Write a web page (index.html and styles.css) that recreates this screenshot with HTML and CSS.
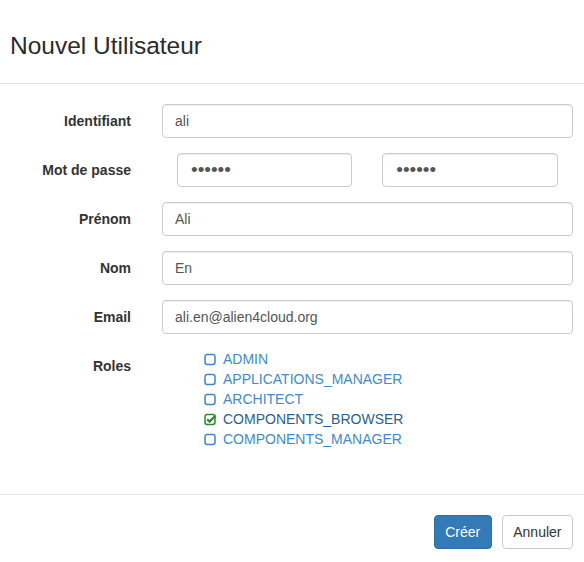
FILE: index.html
```html
<!DOCTYPE html>
<html lang="fr">
<head>
<meta charset="utf-8">
<title>Nouvel Utilisateur</title>
<link rel="stylesheet" href="styles.css">
</head>
<body>
<div class="modal">
  <div class="modal-header">
    <h3 class="modal-title">Nouvel Utilisateur</h3>
  </div>
  <form class="modal-body">
    <div class="form-row">
      <label class="form-label">Identifiant</label>
      <div class="field"><input class="form-control" type="text" value="ali"></div>
    </div>
    <div class="form-row">
      <label class="form-label">Mot de passe</label>
      <div class="field pair">
        <input class="form-control pwd" type="password" value="ali123">
        <input class="form-control pwd" type="password" value="ali123">
      </div>
    </div>
    <div class="form-row">
      <label class="form-label">Prénom</label>
      <div class="field"><input class="form-control" type="text" value="Ali"></div>
    </div>
    <div class="form-row">
      <label class="form-label">Nom</label>
      <div class="field"><input class="form-control" type="text" value="En"></div>
    </div>
    <div class="form-row">
      <label class="form-label">Email</label>
      <div class="field"><input class="form-control" type="text" value="ali.en@alien4cloud.org"></div>
    </div>
    <div class="form-row roles-row">
      <label class="form-label">Roles</label>
      <ul class="roles">
        <li class="role"><svg class="box" viewBox="0 0 13 13" width="13" height="13"><rect x="1" y="1.5" width="10" height="10" rx="2.2" fill="none" stroke="#3f86c8" stroke-width="1.5"/></svg>ADMIN</li>
        <li class="role"><svg class="box" viewBox="0 0 13 13" width="13" height="13"><rect x="1" y="1.5" width="10" height="10" rx="2.2" fill="none" stroke="#3f86c8" stroke-width="1.5"/></svg>APPLICATIONS_MANAGER</li>
        <li class="role"><svg class="box" viewBox="0 0 13 13" width="13" height="13"><rect x="1" y="1.5" width="10" height="10" rx="2.2" fill="none" stroke="#3f86c8" stroke-width="1.5"/></svg>ARCHITECT</li>
        <li class="role checked"><svg class="box" viewBox="0 0 13 13" width="13" height="13"><rect x="1" y="1.5" width="10" height="10" rx="2.2" fill="none" stroke="#2d8a2d" stroke-width="1.5"/><path d="M3.2 6.2 L5.6 8.6 L11.6 2.4" fill="none" stroke="#2d8a2d" stroke-width="2.2"/></svg>COMPONENTS_BROWSER</li>
        <li class="role"><svg class="box" viewBox="0 0 13 13" width="13" height="13"><rect x="1" y="1.5" width="10" height="10" rx="2.2" fill="none" stroke="#3f86c8" stroke-width="1.5"/></svg>COMPONENTS_MANAGER</li>
      </ul>
    </div>
  </form>
  <div class="modal-footer">
    <button class="btn btn-primary" type="button">Créer</button>
    <button class="btn btn-default" type="button">Annuler</button>
  </div>
</div>
</body>
</html>
```

FILE: styles.css
```css
* { box-sizing: border-box; }
html, body {
  margin: 0;
  padding: 0;
  background: #fff;
}
body {
  font-family: "Liberation Sans", Arial, Helvetica, sans-serif;
  font-size: 14px;
  line-height: 20px;
  color: #333;
}
.modal {
  width: 584px;
}
.modal-header {
  height: 84px;
  padding: 32px 10px 0;
  border-bottom: 1px solid #e5e5e5;
}
.modal-title {
  margin: 0;
  font-size: 24.5px;
  line-height: 27px;
  font-weight: 500;
  color: #2b2b2b;
}
.modal-body {
  margin: 0;
  padding: 20px 11px 30px 0;
}
.form-row {
  display: flex;
  align-items: flex-start;
  margin-bottom: 15px;
}
.form-label {
  width: 131px;
  flex: none;
  margin-right: 31px;
  padding-top: 7px;
  text-align: right;
  font-weight: bold;
  line-height: 20px;
}
.field {
  flex: 1;
  min-width: 0;
}
.pair {
  display: flex;
  gap: 30px;
  padding: 0 15.5px 0 15px;
}
.form-control {
  display: block;
  width: 100%;
  min-width: 0;
  height: 34px;
  padding: 6px 12px;
  font-family: inherit;
  font-size: 14px;
  line-height: 20px;
  color: #555;
  background: #fff;
  border: 1px solid #ccc;
  border-radius: 4px;
  box-shadow: inset 0 1px 1px rgba(0,0,0,0.075);
  outline: none;
}
.pair .form-control {
  flex: 1;
}
.pwd {
  font-size: 19px;
  padding: 4px 12px 4px 13px;
  line-height: 24px;
  color: #555;
}
.roles {
  list-style: none;
  margin: 0 0 0 43px;
  padding: 0;
}
.role {
  display: flex;
  align-items: center;
  height: 20px;
  color: #428bca;
  font-size: 14px;
}
.role.checked {
  color: #2a5f8f;
}
.box {
  flex: none;
  margin-right: 6px;
  margin-left: -1px;
}
.modal-footer {
  display: flex;
  justify-content: flex-end;
  gap: 10px;
  padding: 20px 11px 0;
  border-top: 1px solid #e5e5e5;
}
.btn {
  height: 34px;
  padding: 6px 10.5px;
  font-family: inherit;
  font-size: 14px;
  line-height: 20px;
  border: 1px solid transparent;
  border-radius: 4px;
  cursor: pointer;
}
.btn-primary {
  color: #fff;
  background: #337ab7;
  border-color: #2e6da4;
}
.btn-default {
  color: #333;
  background: #fff;
  border-color: #ccc;
}
```
